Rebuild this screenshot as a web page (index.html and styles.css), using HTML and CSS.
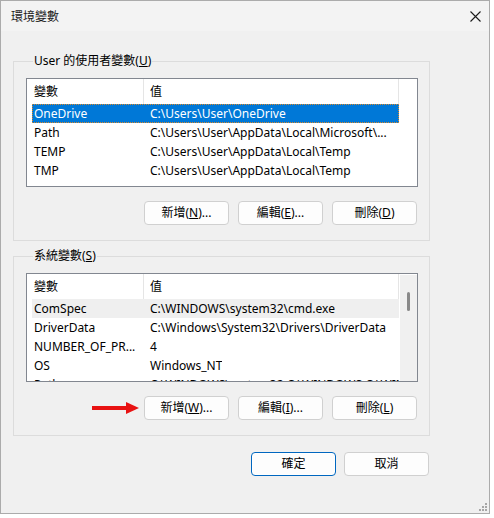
FILE: index.html
```html
<!DOCTYPE html>
<html lang="zh-Hant">
<head>
<meta charset="utf-8">
<title>環境變數</title>
<link rel="stylesheet" href="styles.css">
</head>
<body>
<div class="window">
  <div class="titlebar">
    <span class="title">環境變數</span>
    <svg class="close" width="11" height="11" viewBox="0 0 11 11"><path d="M0.5 0.5 L10.5 10.5 M10.5 0.5 L0.5 10.5" stroke="#1a1a1a" stroke-width="1.1" fill="none"/></svg>
  </div>
  <div class="content">
    <div class="group">
      <div class="group-label">User 的使用者變數(<u>U</u>)</div>
      <div class="list">
        <div class="list-body">
          <div class="header">
            <div class="hcell c1">變數</div>
            <div class="hcell c2">值</div>
          </div>
          <div class="row selected"><div class="cell name">OneDrive</div><div class="cell value">C:\Users\User\OneDrive</div></div>
          <div class="row"><div class="cell name">Path</div><div class="cell value">C:\Users\User\AppData\Local\Microsoft\...</div></div>
          <div class="row"><div class="cell name">TEMP</div><div class="cell value">C:\Users\User\AppData\Local\Temp</div></div>
          <div class="row"><div class="cell name">TMP</div><div class="cell value">C:\Users\User\AppData\Local\Temp</div></div>
        </div>
      </div>
      <div class="btnrow">
        <button class="btn">新增(<u>N</u>)...</button>
        <button class="btn">編輯(<u>E</u>)...</button>
        <button class="btn">刪除(<u>D</u>)</button>
      </div>
    </div>

    <div class="group second">
      <div class="group-label">系統變數(<u>S</u>)</div>
      <div class="list">
        <div class="list-body narrow">
          <div class="header">
            <div class="hcell c1">變數</div>
            <div class="hcell c2">值</div>
          </div>
          <div class="row hover"><div class="cell name">ComSpec</div><div class="cell value">C:\WINDOWS\system32\cmd.exe</div></div>
          <div class="row"><div class="cell name">DriverData</div><div class="cell value">C:\Windows\System32\Drivers\DriverData</div></div>
          <div class="row"><div class="cell name">NUMBER_OF_PR...</div><div class="cell value">4</div></div>
          <div class="row"><div class="cell name">OS</div><div class="cell value">Windows_NT</div></div>
          <div class="row"><div class="cell name">Path</div><div class="cell value">C:\WINDOWS\system32;C:\WINDOWS;C:\WINDOWS\Syst...</div></div>
        </div>
        <div class="scrollbar"><div class="thumb"></div></div>
      </div>
      <div class="btnrow">
        <svg class="arrow" width="47" height="12" viewBox="0 0 47 12"><rect x="0" y="4" width="36" height="4" fill="#e81212"/><polygon points="34,0 47,6 34,12" fill="#e81212"/></svg>
        <button class="btn">新增(<u>W</u>)...</button>
        <button class="btn">編輯(<u>I</u>)...</button>
        <button class="btn">刪除(<u>L</u>)</button>
      </div>
    </div>

    <div class="dialog-buttons">
      <button class="btn primary">確定</button>
      <button class="btn">取消</button>
    </div>
  </div>
  <svg class="grip" width="11" height="11" viewBox="0 0 11 11">
    <rect x="8" y="2" width="2" height="2" fill="#a6a6a6"/>
    <rect x="5" y="5" width="2" height="2" fill="#a6a6a6"/>
    <rect x="8" y="5" width="2" height="2" fill="#a6a6a6"/>
    <rect x="2" y="8" width="2" height="2" fill="#a6a6a6"/>
    <rect x="5" y="8" width="2" height="2" fill="#a6a6a6"/>
    <rect x="8" y="8" width="2" height="2" fill="#a6a6a6"/>
  </svg>
</div>
</body>
</html>
```

FILE: styles.css
```css
html, body {
  margin: 0;
  padding: 0;
  background: #ffffff;
}

body {
  font-family: "Noto Sans", "Noto Sans CJK TC", sans-serif;
  font-size: 12px;
  color: #000;
}

.window {
  position: relative;
  width: 490px;
  height: 514px;
  box-sizing: border-box;
  border: 1px solid #ababab;
  background: #f0f0f0;
}

.titlebar {
  height: 30px;
  background: #f3f3f3;
  display: flex;
  align-items: center;
  justify-content: space-between;
  padding: 0 8px 0 10px;
}

.title {
  font-family: "Noto Sans CJK TC", sans-serif;
  font-size: 12px;
  color: #1a1a1a;
  line-height: 16px;
}

.close {
  display: block;
}

.content {
  padding: 30px 0 0 12px;
}

.group {
  width: 417px;
  box-sizing: border-box;
  border: 1px solid #dcdcdc;
  padding: 0 11px 15px 12px;
}

.group.second {
  margin-top: 15px;
}

.group-label {
  width: fit-content;
  margin: -9px 0 0 7px;
  padding: 0 1px;
  height: 16px;
  line-height: 16px;
  background: #f0f0f0;
  white-space: nowrap;
}

.list {
  margin-top: 9px;
  width: 392px;
  height: 109px;
  box-sizing: border-box;
  border: 1px solid #828790;
  background: #fff;
  overflow: hidden;
  display: flex;
}

.list-body {
  flex: 1;
  overflow: hidden;
}

.header {
  height: 25px;
  display: flex;
}

.hcell {
  box-sizing: border-box;
  line-height: 25px;
  border-right: 1px solid #e5e5e5;
  white-space: nowrap;
}

.hcell.c1 {
  width: 117px;
  padding-left: 7px;
}

.hcell.c2 {
  width: 255px;
  padding-left: 6px;
}

.row {
  margin-left: 5px;
  width: 367px;
  height: 19px;
  display: flex;
  box-sizing: border-box;
  line-height: 19px;
  white-space: nowrap;
}

.row.selected {
  background: #0078d7;
  color: #fff;
  outline: 1px dotted #d9892c;
  outline-offset: -1px;
}

.row.hover {
  background: #efefef;
}

.cell.name {
  width: 116px;
  flex: none;
  padding-left: 2px;
  box-sizing: border-box;
  overflow: hidden;
}

.cell.value {
  padding-left: 2px;
  overflow: hidden;
}

.scrollbar {
  width: 18px;
  flex: none;
  box-sizing: border-box;
  border-left: 1px solid #fff;
  border-top: 1px solid #fff;
  background: #f0f0f0;
  display: flex;
  justify-content: center;
  padding-top: 17px;
}

.thumb {
  width: 3px;
  height: 19px;
  border-radius: 1.5px;
  background: #8a8a8a;
}

.btnrow {
  margin-top: 14px;
  margin-right: 1px;
  display: flex;
  justify-content: flex-end;
  align-items: center;
}

.btn {
  width: 85px;
  height: 24px;
  box-sizing: border-box;
  border: 1px solid #d0d0d0;
  border-radius: 4px;
  background: #fdfdfd;
  font: inherit;
  color: #000;
  padding: 0;
  line-height: 20px;
}

.btn + .btn {
  margin-left: 9px;
}

.btn.primary {
  border: 1px solid #0067c0;
  box-shadow: inset 0 0 0 1px #ffffff;
}

.arrow {
  display: block;
  margin-right: 5px;
}

.dialog-buttons {
  width: 417px;
  margin-top: 16px;
  padding-right: 1px;
  box-sizing: border-box;
  display: flex;
  justify-content: flex-end;
}

.dialog-buttons .btn + .btn {
  margin-left: 8px;
}

.grip {
  position: absolute;
  right: 1px;
  bottom: 1px;
  display: block;
}
```
